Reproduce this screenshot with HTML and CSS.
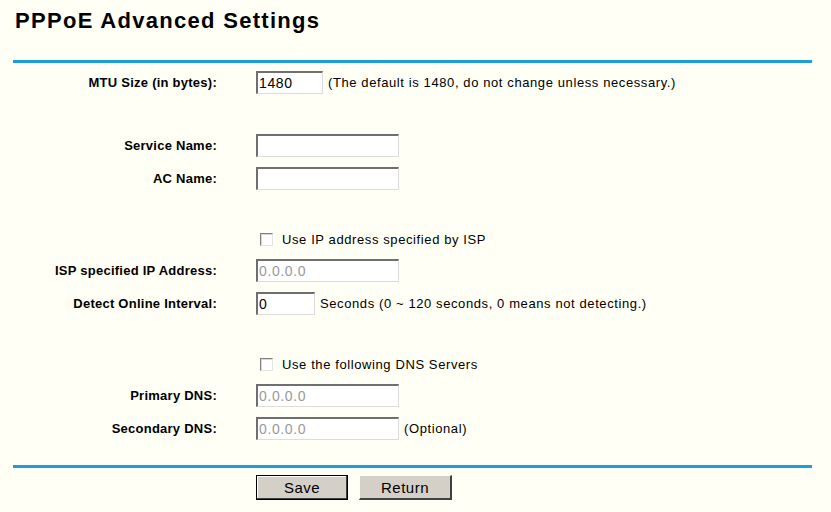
FILE: index.html
```html
<!DOCTYPE html>
<html>
<head>
<meta charset="utf-8">
<title>PPPoE Advanced Settings</title>
<link rel="stylesheet" href="styles.css">
</head>
<body>
<div class="page">
  <h1 class="title">PPPoE Advanced Settings</h1>
  <div class="rule"></div>
  <div class="form">
    <div class="row">
      <label class="lbl">MTU Size (in bytes):</label>
      <div class="ctl"><input class="txt w-mtu" type="text" value="1480"><span class="hint">(The default is 1480, do not change unless necessary.)</span></div>
    </div>
    <div class="spacer"></div>
    <div class="row">
      <label class="lbl">Service Name:</label>
      <div class="ctl"><input class="txt w-long" type="text" value=""></div>
    </div>
    <div class="row">
      <label class="lbl">AC Name:</label>
      <div class="ctl"><input class="txt w-long" type="text" value=""></div>
    </div>
    <div class="spacer"></div>
    <div class="row row-cb">
      <span class="lbl"></span>
      <div class="ctl"><input class="cb" type="checkbox"><span class="cb-text">Use IP address specified by ISP</span></div>
    </div>
    <div class="row">
      <label class="lbl">ISP specified IP Address:</label>
      <div class="ctl"><input class="txt w-long off" type="text" value="0.0.0.0" disabled></div>
    </div>
    <div class="row">
      <label class="lbl">Detect Online Interval:</label>
      <div class="ctl"><input class="txt w-short" type="text" value="0"><span class="hint">Seconds (0 ~ 120 seconds, 0 means not detecting.)</span></div>
    </div>
    <div class="spacer"></div>
    <div class="row row-cb">
      <span class="lbl"></span>
      <div class="ctl"><input class="cb" type="checkbox"><span class="cb-text">Use the following DNS Servers</span></div>
    </div>
    <div class="row">
      <label class="lbl">Primary DNS:</label>
      <div class="ctl"><input class="txt w-long off" type="text" value="0.0.0.0" disabled></div>
    </div>
    <div class="row">
      <label class="lbl">Secondary DNS:</label>
      <div class="ctl"><input class="txt w-long off" type="text" value="0.0.0.0" disabled><span class="hint">(Optional)</span></div>
    </div>
  </div>
  <div class="rule rule-bottom"></div>
  <div class="actions">
    <button class="btn btn-default" type="button">Save</button>
    <button class="btn" type="button">Return</button>
  </div>
</div>
</body>
</html>
```
FILE: styles.css
```css
html, body {
  margin: 0;
  padding: 0;
  background: #fffff5;
}
body {
  font-family: "Liberation Sans", Arial, sans-serif;
  font-size: 13px;
  color: #000;
}
.page {
  padding-left: 13px;
  width: 799px;
}
.title {
  margin: 8px 0 0 2px;
  font-size: 22px;
  line-height: 26px;
  font-weight: bold;
  letter-spacing: 1.3px;
}
.rule {
  height: 3px;
  background: #1c9fd8;
  margin-top: 26px;
}
.form {
  display: flex;
  flex-direction: column;
  margin-top: 3px;
}
.row {
  display: flex;
  align-items: center;
  height: 33px;
}
.row-cb {
  height: 29px;
}
.spacer {
  height: 30px;
}
.lbl {
  width: 204px;
  flex: none;
  text-align: right;
  font-weight: bold;
  letter-spacing: 0.25px;
}
.ctl {
  margin-left: 39px;
  display: flex;
  align-items: center;
  letter-spacing: 0.6px;
}
.txt {
  box-sizing: border-box;
  height: 23px;
  margin: 0;
  padding: 0 1px;
  font-family: "Liberation Sans", Arial, sans-serif;
  font-size: 14px;
  letter-spacing: 0.6px;
  color: #000;
  background: #fff;
  border-style: solid;
  border-width: 2px 1px 1px 2px;
  border-color: #6f6f6f #dcdcdc #dcdcdc #6f6f6f;
  outline: none;
}
.txt.off {
  color: #9a9a9a;
}
.w-mtu { width: 67px; }
.w-long { width: 143px; }
.w-short { width: 59px; }
.hint {
  margin-left: 5px;
}
.cb {
  appearance: none;
  -webkit-appearance: none;
  box-sizing: border-box;
  width: 13px;
  height: 13px;
  margin: 0 0 0 4px;
  background: #fff;
  border-style: solid;
  border-width: 1px;
  border-color: #808080 #e4e4e4 #e4e4e4 #808080;
  box-shadow: inset 1px 1px 0 #d8d8d8;
}
.cb-text {
  margin-left: 9px;
}
.rule-bottom {
  margin-top: 20px;
}
.actions {
  display: flex;
  gap: 11px;
  margin-top: 7px;
  padding-left: 243px;
}
.btn {
  box-sizing: border-box;
  width: 93px;
  height: 25px;
  margin: 0;
  padding: 0;
  font-family: "Liberation Sans", Arial, sans-serif;
  font-size: 15px;
  letter-spacing: 0.5px;
  color: #000;
  background: #d4d0c8;
  border-style: solid;
  border-width: 1px 2px 2px 1px;
  border-color: #fff #404040 #404040 #fff;
}
.btn-default {
  width: 92px;
  border: 1px solid #000;
  box-shadow: inset -1px -1px 0 #404040, inset 1px 1px 0 #fff;
}
```
